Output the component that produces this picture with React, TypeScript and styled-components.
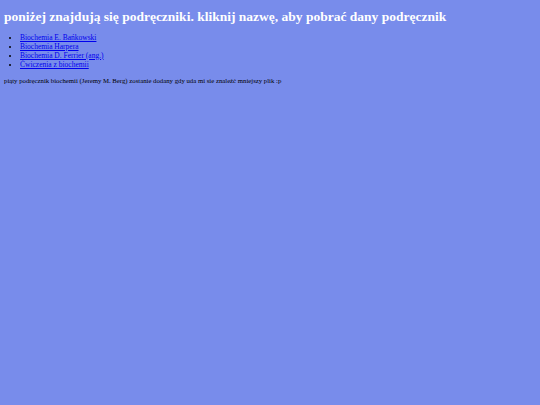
import { createGlobalStyle, styled } from "styled-components";

const GlobalStyle = createGlobalStyle`
    html, body {
        margin: 0;
        background: #788ceb;
    }
    body {
        font-family: "Liberation Serif", "Times New Roman", serif;
        min-height: 405px;
    }
`;

const Page = styled.div`
    padding: 6px 4px;
`;

const Heading = styled.h2`
    margin: 0;
    font-size: 13.5px;
    line-height: 21px;
    font-weight: bold;
    color: #ffffff;
`;

const BookList = styled.ul`
    margin: 5.5px 0 7px;
    padding-left: 16px;
    font-size: 7.5px;
    line-height: 9px;
`;

const BookItem = styled.li``;

const BookLink = styled.a`
    color: #0000ee;
    text-decoration: underline;
`;

const Note = styled.p`
    margin: 0;
    font-size: 6.75px;
    line-height: 9px;
    color: #000000;
`;

const books = [
    "Biochemia E. Bańkowski",
    "Biochemia Harpera",
    "Biochemia D. Ferrier (ang.)",
    "Ćwiczenia z biochemii",
];

export default function App() {
    return (
        <>
            <GlobalStyle />
            <Page>
                <Heading>
                    poniżej znajdują się podręczniki. kliknij nazwę, aby pobrać
                    dany podręcznik
                </Heading>
                <BookList>
                    {books.map((title) => (
                        <BookItem key={title}>
                            <BookLink href="#">{title}</BookLink>
                        </BookItem>
                    ))}
                </BookList>
                <Note>
                    piąty podręcznik biochemii (Jeremy M. Berg) zostanie dodany
                    gdy uda mi sie znaleźć mniejszy plik :p
                </Note>
            </Page>
        </>
    );
}
